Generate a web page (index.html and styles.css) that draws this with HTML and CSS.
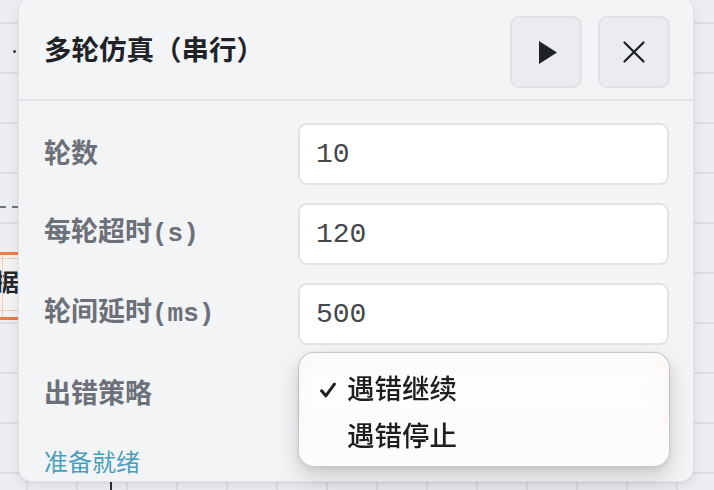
FILE: index.html
```html
<!DOCTYPE html>
<html lang="zh-CN">
<head>
<meta charset="utf-8">
<title>多轮仿真（串行）</title>
<link rel="stylesheet" href="styles.css">
</head>
<body>
<div class="canvas">
  <span class="node-dot"></span>
  <span class="edge-dash"></span>
  <div class="node-card"><span class="node-text">据</span></div>
  <span class="edge-tick"></span>
</div>

<section class="dialog">
  <header class="dialog-head">
    <h1 class="dialog-title">多轮仿真（串行）</h1>
    <div class="head-actions">
      <button class="icon-btn" type="button" aria-label="运行">
        <svg width="22" height="23" viewBox="0 0 22 23"><path d="M4 0 L22 11.5 L4 23 Z" fill="#1f2328"/></svg>
      </button>
      <button class="icon-btn" type="button" aria-label="关闭">
        <svg width="24" height="24" viewBox="0 0 24 24"><path d="M2.5 2.5 L21.5 21.5 M21.5 2.5 L2.5 21.5" stroke="#1f2328" stroke-width="2.3" stroke-linecap="round" fill="none"/></svg>
      </button>
    </div>
  </header>

  <div class="form">
    <div class="field-label">轮数</div>
    <input class="num-input" type="text" value="10">

    <div class="field-label">每轮超时<span class="unit">(s)</span></div>
    <input class="num-input" type="text" value="120">

    <div class="field-label">轮间延时<span class="unit">(ms)</span></div>
    <input class="num-input" type="text" value="500">

    <div class="field-label">出错策略</div>
    <div class="select-wrap">
      <div class="select" aria-label="遇错继续">
        <svg class="chevron" width="14" height="8" viewBox="0 0 14 8"><path d="M1 1 L7 7 L13 1" stroke="#9a9ea5" stroke-width="1.8" fill="none"/></svg>
      </div>
      <div class="popup">
        <div class="menu-item">
          <svg class="check" width="16" height="16" viewBox="0 0 16 16"><path d="M1.6 8.8 L5.8 13.8 L14.4 2.2" stroke="#1e1e1e" stroke-width="3" stroke-linecap="round" stroke-linejoin="round" fill="none"/></svg>
          <span>遇错继续</span>
        </div>
        <div class="menu-item">
          <span></span>
          <span>遇错停止</span>
        </div>
      </div>
    </div>
  </div>

  <div class="status">准备就绪</div>
</section>
</body>
</html>
```

FILE: styles.css
```css
html, body {
  margin: 0;
  padding: 0;
}

body {
  width: 714px;
  height: 490px;
  overflow: hidden;
  position: relative;
  font-family: "Noto Sans CJK SC", "Noto Sans", sans-serif;
  background-color: #edeef1;
  background-image:
    linear-gradient(to bottom, #dcdee1 0, #dcdee1 2px, transparent 2px),
    linear-gradient(to right, #dcdee1 0, #dcdee1 2px, transparent 2px);
  background-size: 50px 50px, 50px 50px;
  background-position: 0 22px, 26px 0;
}

/* diagram canvas behind the dialog */
.canvas {
  position: absolute;
  inset: 0;
}

.node-dot {
  position: absolute;
  left: 13px;
  top: 50px;
  width: 3px;
  height: 3px;
  border-radius: 50%;
  background: #3a3d42;
}

.edge-dash {
  position: absolute;
  left: 0;
  top: 206px;
  width: 18px;
  border-top: 2px dashed #6f737a;
}

.node-card {
  position: absolute;
  left: -82px;
  top: 252px;
  width: 100px;
  height: 62px;
  border-top: 3px solid #ee7c42;
  border-bottom: 3px solid #ee7c42;
  background: #f3f3f4;
}

.node-card::before {
  content: "";
  position: absolute;
  left: 0;
  right: 0;
  top: 3px;
  bottom: 6px;
  border-top: 1px solid #f6cbb1;
  border-bottom: 1px solid #f6cbb1;
}

.node-card::after {
  content: "";
  position: absolute;
  left: 84px;
  top: 0;
  bottom: 0;
  border-left: 1px solid #f6cbb1;
}

.node-text {
  position: absolute;
  right: -1px;
  top: 14px;
  font-size: 24px;
  line-height: 1;
  font-weight: 700;
  color: #25272b;
}

.edge-tick {
  position: absolute;
  left: 110px;
  top: 482px;
  width: 2px;
  height: 8px;
  background: #2e3034;
}

/* dialog */
.dialog {
  position: absolute;
  left: 18px;
  top: -4px;
  width: 676px;
  height: 486px;
  box-sizing: border-box;
  background: #f3f4f6;
  border: 1px solid #e1e3e6;
  border-radius: 14px;
  box-shadow: 0 4px 14px rgba(0, 0, 0, 0.08), 0 1px 3px rgba(0, 0, 0, 0.05);
}

.dialog-head {
  display: flex;
  align-items: center;
  justify-content: space-between;
  padding: 19px 23px 11px 25px;
  border-bottom: 2px solid #e1e3e6;
}

.dialog-title {
  margin: 0;
  padding-bottom: 6px;
  font-size: 27.5px;
  line-height: 1;
  font-weight: 700;
  color: #1f2328;
}

.head-actions {
  display: flex;
  gap: 16px;
}

.icon-btn {
  width: 72px;
  height: 72px;
  box-sizing: border-box;
  padding: 0;
  display: flex;
  align-items: center;
  justify-content: center;
  background: #ebecef;
  border: 2px solid #dfe1e4;
  border-radius: 9px;
}

.form {
  display: grid;
  grid-template-columns: 254px 371px;
  grid-auto-rows: 62px;
  row-gap: 18px;
  align-items: center;
  padding: 22px 23px 0 25px;
}

.field-label {
  padding-bottom: 6px;
  font-size: 27px;
  line-height: 1;
  font-weight: 700;
  color: #6b7079;
  white-space: nowrap;
}

.unit {
  font-family: "Liberation Mono", monospace;
  font-size: 26px;
  font-weight: 700;
}

.num-input {
  box-sizing: border-box;
  width: 100%;
  height: 62px;
  margin: 0;
  padding: 0 16px;
  border: 2px solid #e1e3e6;
  border-radius: 9px;
  background: #ffffff;
  font-family: "Liberation Mono", monospace;
  font-size: 28px;
  color: #45474b;
  outline: none;
}

.select-wrap {
  position: relative;
  height: 62px;
}

.select {
  box-sizing: border-box;
  height: 62px;
  display: flex;
  align-items: center;
  justify-content: flex-end;
  padding: 0 14px 0 46px;
  border: 2px solid #ec7a3e;
  border-radius: 9px;
  background: #ffffff;
}

.popup {
  position: absolute;
  left: 0;
  top: -11px;
  width: 372px;
  height: 115px;
  box-sizing: border-box;
  padding: 12px 0 8px;
  border-radius: 16px;
  background: rgba(253, 253, 253, 0.84);
  -webkit-backdrop-filter: blur(8px);
  backdrop-filter: blur(8px);
  border: 1px solid rgba(0, 0, 0, 0.2);
  box-shadow: 0 10px 22px rgba(0, 0, 0, 0.16), 0 2px 6px rgba(0, 0, 0, 0.08);
}

.menu-item {
  box-sizing: border-box;
  height: 47px;
  padding: 0 0 1px 21px;
  display: grid;
  grid-template-columns: 27px auto;
  align-items: center;
  font-size: 27.5px;
  line-height: 1;
  font-weight: 500;
  color: #1e1e1e;
}

.check {
  margin-top: 3px;
}

.status {
  margin-top: 19px;
  padding-left: 25px;
  font-size: 24px;
  line-height: 34px;
  color: #4a9fba;
}
```
